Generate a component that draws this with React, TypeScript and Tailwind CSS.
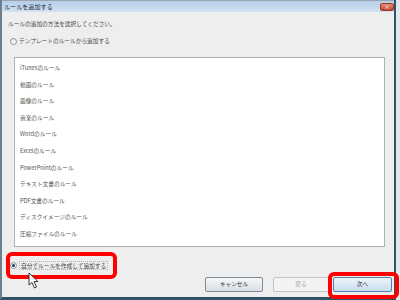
import React from 'react';

const rules = [
  'iTunesのルール',
  '動画のルール',
  '画像のルール',
  '音楽のルール',
  'Wordのルール',
  'Excelのルール',
  'PowerPointのルール',
  'テキスト文書のルール',
  'PDF文書のルール',
  'ディスクイメージのルール',
  '圧縮ファイルのルール',
];

const Radio = ({ checked }: { checked?: boolean }) => (
  <span className="w-[7px] h-[7px] rounded-full border border-[#8b9096] bg-gradient-to-b from-[#e2e4e6] to-[#ffffff] flex items-center justify-center shrink-0">
    {checked && <span className="w-[3px] h-[3px] rounded-full bg-[#1f3a5c]" />}
  </span>
);

const App = () => {
  return (
    <div className="relative w-[400px] h-[300px] overflow-hidden bg-[#e4e8ec] font-['Noto_Sans_CJK_JP','Noto_Sans',sans-serif] text-[#4a4a4a]">
      {/* Dialog window */}
      <div className="w-[396px] h-[300px] flex flex-col bg-[#eeeeee] border-l-2 border-l-[#6e7f8f] border-r-2 border-r-[#2f5466] border-b-[3px] border-b-[#2f5466]">
        {/* Title bar */}
        <div className="h-[12px] shrink-0 flex items-center justify-between border-t border-t-[#9aa5b0] bg-gradient-to-b from-[#b6cde9] to-[#d2e2f3]">
          <span className="pl-[2px] text-[6.1px] leading-[8px] text-[#1e2a36]">ルールを追加する</span>
          <span className="w-[14px] h-[8px] rounded-[2px] border border-[#9a3b2e] bg-gradient-to-b from-[#e98a7a] to-[#c5432f] flex items-center justify-center text-white text-[6px] leading-none">
            ×
          </span>
        </div>

        {/* Body */}
        <div className="flex flex-col text-[5.7px]">
          <div className="mt-[8px] h-[8px] leading-[8px] pl-[6px]">ルールの追加の方法を選択してください。</div>

          <div className="mt-[9px] h-[8px] flex items-center gap-[2px] pl-[8px]">
            <Radio />
            <span className="leading-[8px]">テンプレートのルールから追加する</span>
          </div>

          <div className="mt-[12px] ml-[12px] w-[371px] h-[190px] bg-white border border-[#adb2b7] pt-[2px] flex flex-col">
            {rules.map((r) => (
              <div key={r} className="h-[16.6px] flex items-center pl-[5px] text-[#555]">
                {r}
              </div>
            ))}
          </div>

          <div className="mt-[14px] h-[8px] flex items-center gap-[2px] pl-[8px]">
            <Radio checked />
            <span className="leading-[7px] border border-dotted border-[#b0b0b0] px-[1px] text-[#444]">自分でルールを作成して追加する</span>
          </div>

          <div className="mt-[8px] h-[15px] flex justify-end pr-[2px]">
            <button className="w-[58px] h-[15px] rounded-[2px] border border-[#7d8a97] bg-gradient-to-b from-[#f6f6f6] to-[#d9dfe6] text-[5.7px] text-[#333]">
              キャンセル
            </button>
            <button className="ml-[10px] w-[56px] h-[15px] rounded-[2px] border border-[#c3c6c9] bg-[#f3f3f3] text-[5.7px] text-[#a3a3a3]">
              戻る
            </button>
            <button className="ml-[4px] w-[59px] h-[15px] rounded-[2px] border border-[#4f7fae] bg-gradient-to-b from-[#eef5fc] to-[#c9dcee] text-[5.7px] text-[#333]">
              次へ
            </button>
          </div>
        </div>
      </div>

      {/* Annotation highlights */}
      <div className="absolute left-[6px] top-[252px] w-[111px] h-[27px] rounded-[6px] border-[4px] border-[#f00]" />
      <div className="absolute left-[328px] top-[272px] w-[71px] h-[27px] rounded-[6px] border-[4px] border-[#f00]" />

      {/* Mouse pointer */}
      <svg className="absolute left-[28px] top-[272px]" width="11" height="17" viewBox="0 0 11 17">
        <path d="M1 1 L1 13 L4 10.5 L6.5 16 L8.5 15 L6 9.5 L10 9.5 Z" fill="#fff" stroke="#222" strokeWidth="0.9" strokeLinejoin="round" />
      </svg>
    </div>
  );
};

export default App;
